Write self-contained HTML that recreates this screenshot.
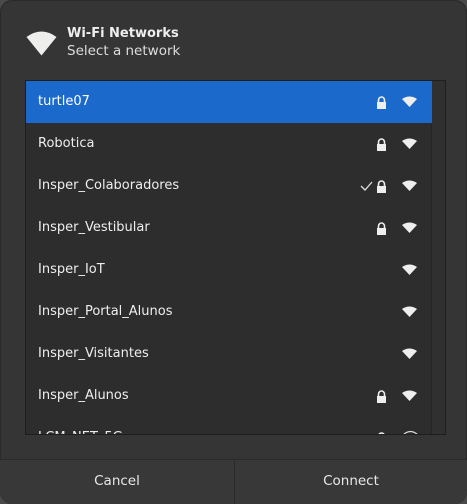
<!DOCTYPE html>
<html><head><style>
*{margin:0;padding:0;box-sizing:border-box}
body{width:467px;height:504px;background:#4a4a4a;font-family:"DejaVu Sans","Liberation Sans",sans-serif;overflow:hidden;position:relative}
.dlg{position:absolute;left:0;top:0;width:467px;height:504px;background:#353535;border-radius:12px;overflow:hidden;box-shadow:inset 0 0 0 1px #2a2a2a}
.t1{position:absolute;left:67px;top:26px;color:#eee;font-weight:bold;font-size:13px}
.t2{position:absolute;left:67px;top:43px;color:#ddd;font-size:13.5px}
.list{position:absolute;left:25px;top:80px;width:421px;height:355px;background:#2d2d2d;border:1px solid #1e1e1e;overflow:hidden}
.row{position:absolute;left:0;width:406px;height:42px;color:#eee;font-size:13px;line-height:42px;padding-left:12px}
.sel{background:#1b6acb;color:#fff}
.ic{position:absolute;top:0}
.sb{position:absolute;left:408px;top:4px;width:7px;height:61px;background:#b0b0b0;border-radius:4px}
.sbt{position:absolute;left:405px;top:0;width:14px;height:355px;background:#303030;border-left:1px solid #252525}
.btns{position:absolute;left:0;top:459px;width:467px;height:45px;border-top:1px solid #2a2a2a;background:#383838}
.b{position:absolute;top:0;height:45px;line-height:42px;text-align:center;color:#e8e8e8;font-size:13.5px}
</style></head><body>
<div class="dlg">
<svg style="position:absolute;left:26px;top:30px" width="31" height="26" viewBox="0 0 31 26"><path d="M0.5 7 Q15.5 -4 30.5 7 L15.5 25.5 Z" fill="#eeeeec"/></svg>
<div class="t1">Wi-Fi Networks</div>
<div class="t2">Select a network</div>
<div class="list">
<div class="sbt"><div class="sb"></div></div>
<div id="rows"></div>
</div>
<div class="btns">
<div class="b" style="left:0;width:235px;border-right:1px solid #2a2a2a">Cancel</div>
<div class="b" style="left:235px;width:232px">Connect</div>
</div>
</div>
<script>
var n=[["turtle07",1,0],["Robotica",1,0],["Insper_Colaboradores",1,1],["Insper_Vestibular",1,0],["Insper_IoT",0,0],["Insper_Portal_Alunos",0,0],["Insper_Visitantes",0,0],["Insper_Alunos",1,0],["LCM_NET_5G",1,0]];
var h="";
var lock='<svg class="ic" style="left:350px;top:15px" width="11" height="13" viewBox="0 0 11 13"><path d="M2.5 6V4a3 3 0 0 1 6 0v2" stroke="#eee" stroke-width="1.6" fill="none"/><rect x="1" y="6" width="9" height="7" fill="#eee"/></svg>';
var wifi='<svg class="ic" style="left:376px;top:15px" width="15" height="11" viewBox="0 0 15 11"><path d="M0 3 Q7.5 -2 15 3 L7.5 11 Z" fill="#eee"/></svg>';
var wifi2='<svg class="ic" style="left:376px;top:13px" width="17" height="14" viewBox="0 0 17 14"><path d="M1 5 Q8.5 -2 16 5 L8.5 13 Z" fill="none" stroke="#ddd" stroke-width="1.2"/></svg>';
var chk='<svg class="ic" style="left:334px;top:16px" width="13" height="10" viewBox="0 0 13 10"><path d="M1 5 L5 9 L12 1" stroke="#ddd" stroke-width="1.3" fill="none"/></svg>';
n.forEach(function(r,i){h+='<div class="row'+(i==0?' sel':'')+'" style="top:'+(i*42)+'px">'+r[0]+(r[1]?lock:'')+(r[2]?chk:'')+(i==8?wifi2:wifi)+'</div>'});
document.getElementById("rows").innerHTML=h;
</script>
</body></html>
